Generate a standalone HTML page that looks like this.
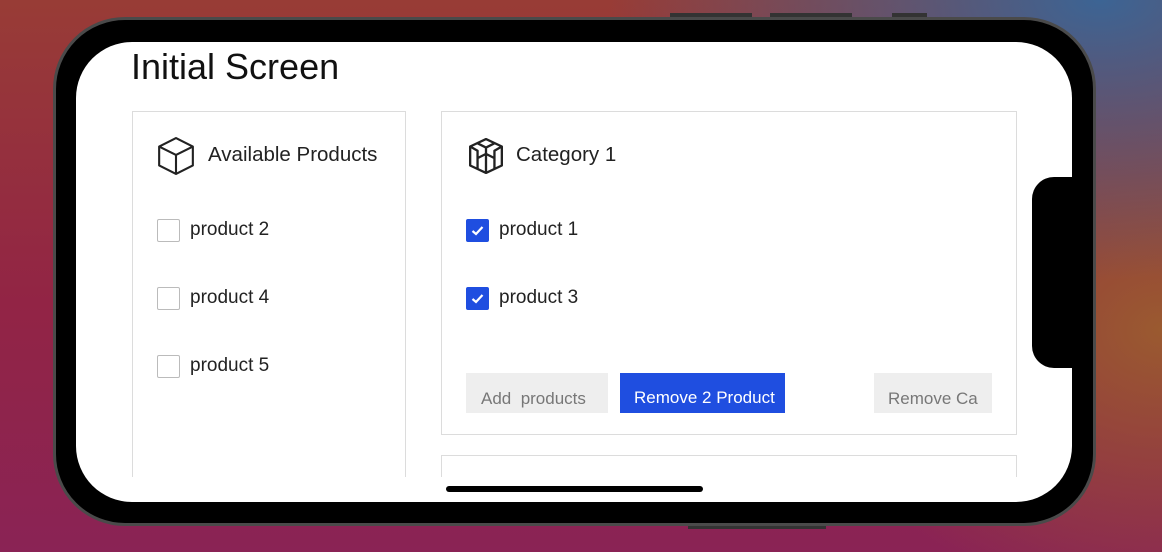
<!DOCTYPE html><html><head><style>
*{margin:0;padding:0;box-sizing:border-box}
body{width:1162px;height:552px;overflow:hidden;position:relative;font-family:"Liberation Sans",sans-serif;
background:radial-gradient(ellipse 700px 400px at 1100px 0px,#3c6494 0%,rgba(60,100,148,0) 70%),radial-gradient(ellipse 500px 400px at 1162px 330px,#9a5a30 0%,rgba(154,90,48,0) 70%),linear-gradient(180deg,#983c36 0%,#922445 55%,#8a2355 100%)}
.btn{position:absolute;background:#333;height:4px}
.phone{position:absolute;left:53px;top:17px;width:1043px;height:509px;border-radius:72px;background:#000;border:3px solid #4a4a4a}
.screen{position:absolute;left:76px;top:42px;width:996px;height:460px;border-radius:56px;background:#fff;overflow:hidden}
.notch{position:absolute;left:1032px;top:177px;width:45px;height:191px;background:#000;border-radius:22px 0 0 22px}
.clip{position:absolute;left:0;top:0;width:996px;height:435px;overflow:hidden}
.panel{position:absolute;border:1px solid #dcdcdc;background:#fff}
.t{position:absolute;font-size:19px;color:#222;white-space:nowrap}
.h{font-size:20.5px}
.cb{position:absolute;width:23px;height:23px;border:1px solid #bbb;border-radius:2px;background:#fff}
.cb.on{background:#1f4ee0;border-color:#1f4ee0}
.b{position:absolute;height:37px;font-size:17px;white-space:nowrap;padding-top:15px}
</style></head><body>
<div class="btn" style="left:670px;top:13px;width:82px"></div>
<div class="btn" style="left:770px;top:13px;width:82px"></div>
<div class="btn" style="left:892px;top:13px;width:35px"></div>
<div class="btn" style="left:688px;top:525px;width:138px"></div>
<div class="phone"></div>
<div class="screen"><div class="clip">
<div class="t" style="left:55px;top:4px;font-size:36px;color:#111">Initial Screen</div>
<div class="panel" style="left:56px;top:69px;width:274px;height:420px">
<svg style="position:absolute;left:24px;top:24px" width="38" height="40" viewBox="0 0 36 38" fill="none" stroke="#222" stroke-width="2" stroke-linejoin="round"><path d="M18 2L34 10V28L18 36L2 28V10Z"/><path d="M2 10L18 18L34 10M18 18V36"/></svg>
<div class="t h" style="left:75px;top:31px">Available Products</div>
<div class="cb" style="left:24px;top:107px"></div><div class="t" style="left:57px;top:107px">product 2</div>
<div class="cb" style="left:24px;top:175px"></div><div class="t" style="left:57px;top:175px">product 4</div>
<div class="cb" style="left:24px;top:243px"></div><div class="t" style="left:57px;top:243px">product 5</div>
</div>
<div class="panel" style="left:365px;top:69px;width:576px;height:324px">
<svg style="position:absolute;left:26px;top:25px" width="36" height="38" viewBox="0 0 34 36" fill="none" stroke="#222" stroke-width="2.2" stroke-linejoin="round"><path d="M17 2L32 9V27L17 34L2 27V9Z"/><path d="M9 6L17 10L25 6M17 10V16M2 9L9 13V20L17 16L25 20V13L32 9M9 20V30M25 20V30M17 16V34"/></svg>
<div class="t h" style="left:74px;top:31px">Category 1</div>
<div class="cb on" style="left:24px;top:107px"><svg width="21" height="21" viewBox="0 0 21 21"><path d="M5.5 11L9 14L15.5 7" stroke="#fff" stroke-width="2.2" fill="none"/></svg></div><div class="t" style="left:57px;top:107px">product 1</div>
<div class="cb on" style="left:24px;top:175px"><svg width="21" height="21" viewBox="0 0 21 21"><path d="M5.5 11L9 14L15.5 7" stroke="#fff" stroke-width="2.2" fill="none"/></svg></div><div class="t" style="left:57px;top:175px">product 3</div>
<div class="b" style="left:24px;top:261px;width:142px;background:#eee;color:#777;padding-left:15px;padding-top:16px;height:40px">Add&nbsp; products</div>
<div class="b" style="left:178px;top:261px;width:165px;background:#1f4ee0;color:#fff;padding-left:14px;height:40px">Remove 2 Product</div>
<div class="b" style="left:432px;top:261px;width:118px;background:#eee;color:#777;padding-left:14px;padding-top:16px;height:40px">Remove Ca</div>
</div>
<div class="panel" style="left:365px;top:413px;width:576px;height:100px"></div>
</div>
<div style="position:absolute;left:370px;top:444px;width:257px;height:6px;border-radius:3px;background:#000"></div>
</div>
<div class="notch"></div>
</body></html>
